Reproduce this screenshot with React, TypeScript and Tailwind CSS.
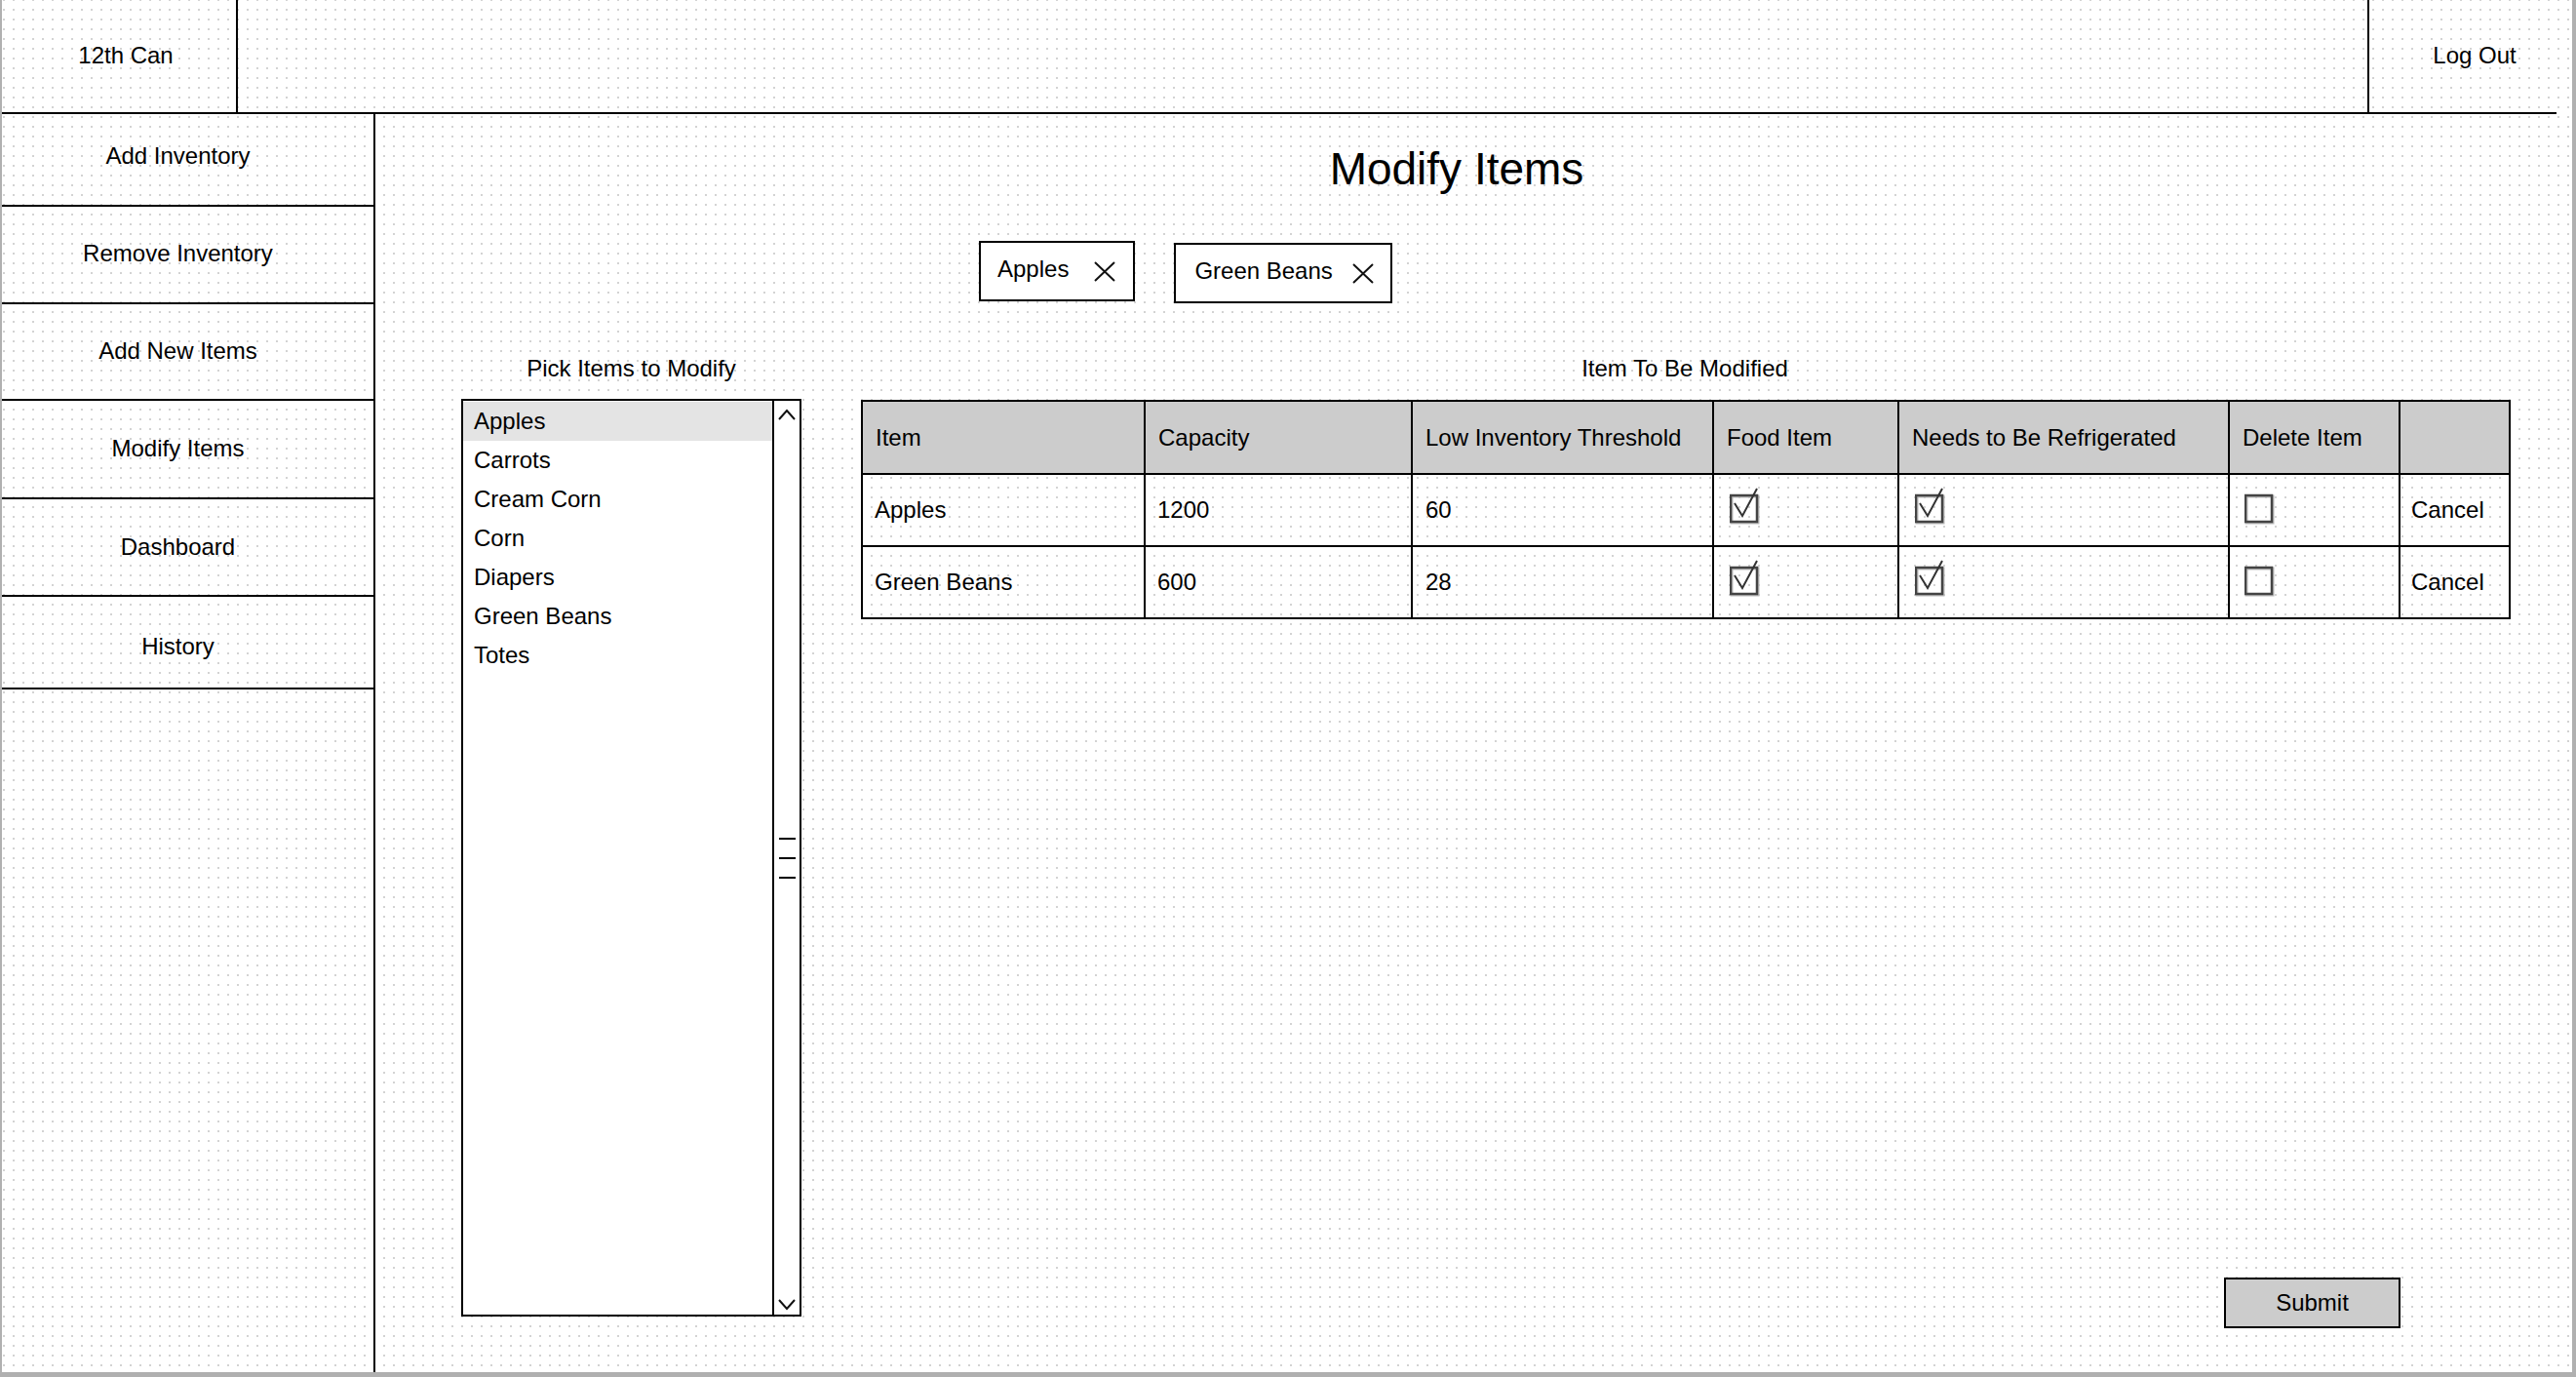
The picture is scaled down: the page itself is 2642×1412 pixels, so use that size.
import React from "react";

const sideItems = [
  { label: "Add Inventory", h: "h-[95px] pb-[8px]" },
  { label: "Remove Inventory", h: "h-[100px] pb-[2px]" },
  { label: "Add New Items", h: "h-[99px] pb-[2px]" },
  { label: "Modify Items", h: "h-[101px] pb-[2px]" },
  { label: "Dashboard", h: "h-[100px]" },
  { label: "History", h: "h-[95px] pt-[8px]" },
];

const pickList = ["Apples", "Carrots", "Cream Corn", "Corn", "Diapers", "Green Beans", "Totes"];

const columns = [
  { title: "Item", w: "w-[290px]" },
  { title: "Capacity", w: "w-[274px]" },
  { title: "Low Inventory Threshold", w: "w-[309px]" },
  { title: "Food Item", w: "w-[190px]" },
  { title: "Needs to Be Refrigerated", w: "w-[339px]" },
  { title: "Delete Item", w: "w-[175px]" },
  { title: "", w: "w-[113px]" },
];

const rows = [
  { item: "Apples", capacity: "1200", low: "60", food: true, cold: true, del: false },
  { item: "Green Beans", capacity: "600", low: "28", food: true, cold: true, del: false },
];

function CloseX() {
  return (
    <svg width="22" height="21" viewBox="0 0 22 21" className="shrink-0">
      <path d="M1 1 L21 20 M21 1 L1 20" stroke="#111" strokeWidth="2" fill="none" />
    </svg>
  );
}

function Checkbox({ checked }: { checked: boolean }) {
  return (
    <svg width="32" height="38" viewBox="0 0 32 38" className="block">
      <rect x="2" y="9" width="27" height="27" fill="none" stroke="#bbb" strokeWidth="3" />
      <rect x="1" y="8" width="27" height="27" fill="none" stroke="#444" strokeWidth="2.5" />
      {checked && <path d="M5 16 L13 29 L28 1" fill="none" stroke="#333" strokeWidth="2" />}
    </svg>
  );
}

function Chip({ label, cls }: { label: string; cls: string }) {
  return (
    <div className={`h-[62px] flex items-center whitespace-nowrap border-2 border-black bg-white ${cls}`}>
      <span className="text-[24px] leading-none -mt-[4px]">{label}</span>
      <CloseX />
    </div>
  );
}

export default function App() {
  return (
    <div
      className="w-[2642px] h-[1412px] flex flex-col border-l-2 border-r-4 border-b-[5px] border-[#b0b0b0] bg-white bg-[image:conic-gradient(from_270deg_at_2px_2px,#d3d3d3_25%,transparent_0)] bg-[length:10px_10px] bg-[position:1px_9px] text-black"
      style={{ fontFamily: '"Liberation Sans", Arial, sans-serif' }}
    >
      {/* header */}
      <div className="h-[117px] shrink-0 flex border-b-2 border-black mr-[16px]">
        <div className="w-[242px] border-r-2 border-black flex items-center justify-center pl-[14px] pb-[2px] text-[24px]">
          12th Can
        </div>
        <div className="flex-1" />
        <div className="w-[194px] border-l-2 border-black flex items-center justify-center pl-[24px] pb-[2px] text-[24px]">
          Log Out
        </div>
      </div>

      <div className="flex-1 flex min-h-0">
        {/* sidebar */}
        <div className="w-[383px] shrink-0 border-r-2 border-black flex flex-col">
          {sideItems.map((s) => (
            <div
              key={s.label}
              className={`${s.h} border-b-2 border-black flex items-center justify-center pr-[20px] text-[24px]`}
            >
              {s.label}
            </div>
          ))}
        </div>

        {/* main */}
        <div className="flex-1 flex flex-col pb-[45px]">
          <h1 className="mt-[33px] text-[46px] leading-none text-center pr-[35px]">Modify Items</h1>

          <div className="mt-[51px] ml-[619px] flex items-start gap-[40px]">
            <Chip label="Apples" cls="pl-[17px] pr-[18px] gap-[26px]" />
            <Chip label="Green Beans" cls="pl-[19px] pr-[17px] gap-[20px] mt-[2px]" />
          </div>

          <div className="mt-[53px] flex-1 flex ml-[88px] gap-[61px]">
            {/* pick list */}
            <div className="w-[349px] flex flex-col">
              <div className="h-[28px] text-[24px] leading-[28px] text-center mb-[17px]">Pick Items to Modify</div>
              <div className="h-[941px] border-2 border-black bg-white flex">
                <div className="flex-1 pt-[1px]">
                  {pickList.map((p, i) => (
                    <div
                      key={p}
                      className={`h-[40px] leading-[40px] pl-[11px] text-[24px] ${i === 0 ? "bg-[#e4e4e4]" : ""}`}
                    >
                      {p}
                    </div>
                  ))}
                </div>
                <div className="w-[28px] border-l-2 border-black flex flex-col items-center">
                  <svg width="18" height="12" viewBox="0 0 18 12" className="mt-[8px]">
                    <path d="M1 11 L9 2 L17 11" fill="none" stroke="#111" strokeWidth="2" />
                  </svg>
                  <div className="mt-[428px] flex flex-col gap-[18px]">
                    <div className="w-[17px] h-[2px] bg-black" />
                    <div className="w-[17px] h-[2px] bg-black" />
                    <div className="w-[17px] h-[2px] bg-black" />
                  </div>
                  <svg width="18" height="12" viewBox="0 0 18 12" className="mt-auto mb-[4px]">
                    <path d="M1 1 L9 10 L17 1" fill="none" stroke="#111" strokeWidth="2" />
                  </svg>
                </div>
              </div>
            </div>

            {/* table */}
            <div className="w-[1690px] flex flex-col">
              <div className="h-[28px] text-[24px] leading-[28px] text-center mb-[18px]">Item To Be Modified</div>
              <table className="table-fixed border-collapse border-2 border-black w-[1690px] text-[24px]">
                <thead>
                  <tr className="h-[75px] bg-[#cccccc]">
                    {columns.map((c, i) => (
                      <th
                        key={i}
                        className={`${c.w} border-2 border-black text-left font-normal pl-[13px] pr-0 align-middle`}
                      >
                        {c.title}
                      </th>
                    ))}
                  </tr>
                </thead>
                <tbody>
                  {rows.map((r) => (
                    <tr key={r.item} className="h-[74px]">
                      <td className="border-2 border-black pl-[12px]">{r.item}</td>
                      <td className="border-2 border-black pl-[12px]">{r.capacity}</td>
                      <td className="border-2 border-black pl-[13px]">{r.low}</td>
                      <td className="border-2 border-black pl-[16px]">
                        <div className="-mt-[8px]">
                          <Checkbox checked={r.food} />
                        </div>
                      </td>
                      <td className="border-2 border-black pl-[16px]">
                        <div className="-mt-[8px]">
                          <Checkbox checked={r.cold} />
                        </div>
                      </td>
                      <td className="border-2 border-black pl-[15px]">
                        <div className="-mt-[8px]">
                          <Checkbox checked={r.del} />
                        </div>
                      </td>
                      <td className="border-2 border-black pl-[11px]">Cancel</td>
                    </tr>
                  ))}
                </tbody>
              </table>

              <button className="mt-auto self-end mr-[111px] w-[181px] h-[52px] border-2 border-black bg-[#cccccc] text-[24px] leading-none">
                Submit
              </button>
            </div>
          </div>
        </div>
      </div>
    </div>
  );
}
